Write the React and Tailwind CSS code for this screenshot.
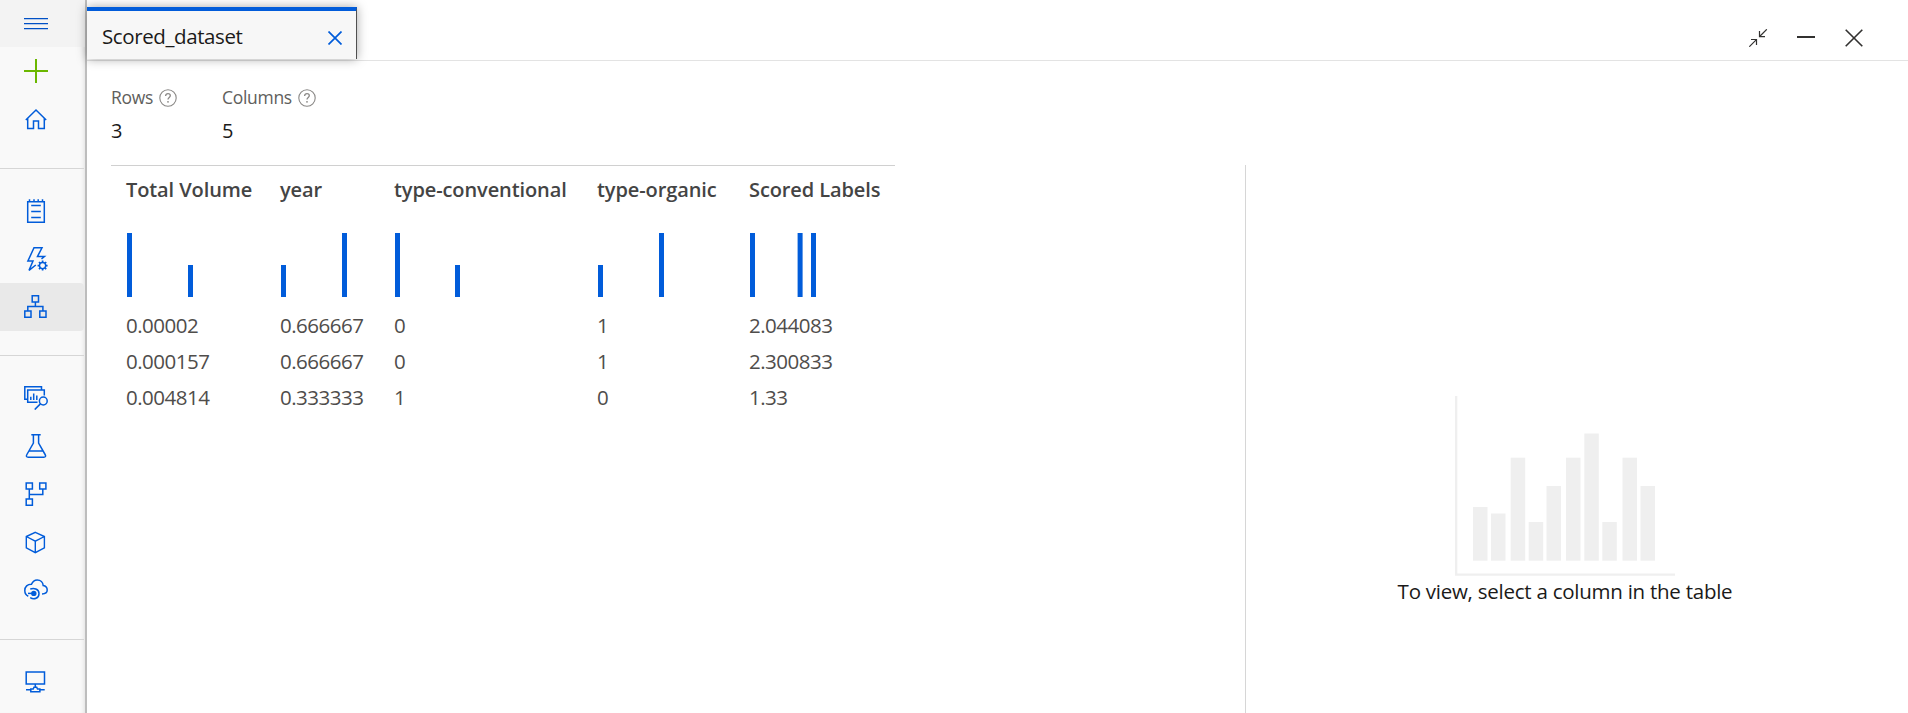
const BLUE = '#015cda';

function Icon({ children, stroke = BLUE }) {
  return (
    <svg className="block size-6" viewBox="0 0 24 24" fill="none" stroke={stroke} strokeWidth="1.5">
      {children}
    </svg>
  );
}

const HomeIcon = () => (
  <Icon>
    <path d="M1.8 13 L12 3 L22.2 13 M3.7 11.5 V21.5 H9.5 V14 H14.5 V21.5 H20.3 V11.5" />
  </Icon>
);
const NotebookIcon = () => (
  <Icon>
    <path d="M3.7 2.7 H20.3 V23.2 H3.7 Z" />
    <path d="M5.5 0.3 V3 M10 0.3 V3 M14.2 0.3 V3 M18.5 0.3 V3" />
    <path d="M7.2 6.6 H16.8 M7.2 12.6 H16.8 M7.2 18.6 H16.8" />
  </Icon>
);
const AutomatedIcon = () => (
  <Icon>
    <path d="M11.8 18 L5 23.3 L9 14 H3.9 L10 0.8 H18 L13.5 9.4 H20.5 L17.5 12" />
    <circle cx="18.6" cy="18.6" r="3.1" strokeWidth="1.4" />
    <path d="M18.6 13.6 V15.4 M18.6 21.8 V23.6 M13.6 18.6 H15.4 M21.8 18.6 H23.6 M15 15 L16.3 16.3 M20.9 20.9 L22.2 22.2 M15 22.2 L16.3 20.9 M20.9 16.3 L22.2 15" strokeWidth="1.7" />
  </Icon>
);
const DesignerIcon = () => (
  <Icon>
    <path d="M8.2 0.8 H14.5 V7 H8.2 Z M0.8 15.9 H7 V22.2 H0.8 Z M15.8 15.9 H22 V22.2 H15.8 Z M11.4 7 V11.5 M3.8 15.9 V11.5 H18.9 V15.9" />
  </Icon>
);
const DatasetIcon = () => (
  <Icon>
    <path d="M3.3 13.3 H0.8 V0.8 H17.5 V4" />
    <path d="M13.5 16.2 H3.7 V4 H20.3 V9.5" />
    <path d="M6.8 14 V10.8 M9.7 14 V7.6 M12.8 14 V9.5" />
    <circle cx="19.3" cy="15" r="3.9" />
    <path d="M16.4 17.9 L10.7 23.6" />
  </Icon>
);
const FlaskIcon = () => (
  <Icon>
    <path d="M7.3 0.8 H16.7 M9.4 0.8 V9 L2.9 20.5 C1.9 22.2 2.4 23.2 4.2 23.2 H19.8 C21.6 23.2 22.1 22.2 21.1 20.5 L14.6 9 V0.8 M5.2 17 H18.8" />
  </Icon>
);
const PipelineIcon = () => (
  <Icon>
    <path d="M2.2 0.9 H8.4 V7.1 H2.2 Z M15.7 0.9 H21.9 V7.1 H15.7 Z M2.2 17 H8.4 V23.2 H2.2 Z M5.3 7.1 V17 M5.3 12.6 H18.8 V7.1" />
  </Icon>
);
const CubeIcon = () => (
  <Icon>
    <path d="M11.3 2.3 L20.4 6.5 V17.8 L11.3 22.6 L2.3 17.8 V6.5 Z M2.3 6.5 L11.3 11.2 L20.4 6.5 M11.3 11.2 V22.6" strokeWidth="1.4" />
  </Icon>
);
const CloudIcon = () => (
  <Icon>
    <path d="M4.3 18.2 C2 17.2 0.8 15.2 0.8 12.5 C0.8 8.7 3.5 6.1 7.5 6.2 C8.7 3.2 10.7 1.9 13.2 1.9 C16.5 1.9 19 4.2 19.2 7.6 C21.8 8 23.2 9.7 23.2 12.1 C23.2 14.8 21.4 16 18 16" />
    <path d="M6.2 11.2 C9.5 9.5 15 10.9 15 15.4 C15 20.4 10 22.1 6.2 19.6" />
    <circle cx="9.8" cy="15.4" r="2.7" fill={BLUE} stroke="none" />
    <path d="M4 15.4 H9" />
  </Icon>
);
const ComputeIcon = () => (
  <Icon>
    <path d="M2.2 1.9 H20.5 V13.9 H2.2 Z M11.3 13.9 V17 M2 19.8 H6.7 M16 19.8 H20.7 M6.8 21.8 V19 H9.2 L10 17.2 H12.7 L13.5 19 H15.9 V21.8 Z" />
  </Icon>
);

const NavItem = ({ children, active }) => (
  <a className={active ? 'flex h-12 w-[84px] items-center rounded-r bg-[#e9e9e9] pl-6' : 'flex h-12 items-center pl-6'}>
    {children}
  </a>
);
const Divider = () => <div className="mb-[18px] h-px w-[84px] shrink-0 bg-[#d6d6d6]" />;

function Sidebar() {
  return (
    <nav className="flex w-[87px] shrink-0 flex-col border-r-2 border-[#bdbdbd] bg-[#f9f9f9] shadow-[inset_-4px_0_4px_-3px_rgba(0,0,0,0.1)]">
      <div className="flex h-[47px] items-start bg-[#f3f3f3] pt-3 pl-6">
        <svg className="block h-6 w-6" viewBox="0 0 24 24" fill="#0050c5">
          <path d="M0 6h24v1.2h-24z M0 11h24v1.2h-24z M0 16h24v1.2h-24z" />
        </svg>
      </div>
      <NavItem>
        <svg className="block size-6" viewBox="0 0 24 24" fill="#6bb700">
          <path d="M11 0h2v24h-2z M0 11h24v2H0z" />
        </svg>
      </NavItem>
      <NavItem><HomeIcon /></NavItem>
      <div className="h-[25px]" />
      <Divider />
      <NavItem><NotebookIcon /></NavItem>
      <NavItem><AutomatedIcon /></NavItem>
      <NavItem active><DesignerIcon /></NavItem>
      <div className="h-6" />
      <Divider />
      <NavItem><DatasetIcon /></NavItem>
      <NavItem><FlaskIcon /></NavItem>
      <NavItem><PipelineIcon /></NavItem>
      <NavItem><CubeIcon /></NavItem>
      <NavItem><CloudIcon /></NavItem>
      <div className="h-[25px]" />
      <Divider />
      <NavItem><ComputeIcon /></NavItem>
    </nav>
  );
}

function Header() {
  return (
    <header className="flex h-[61px] shrink-0 items-start border-b border-[#e3e3e3]">
      <div className="mt-[7px] flex h-[52px] w-[270px] items-center justify-between border-t-4 border-r border-t-[#015cda] border-r-[#505050] bg-[#f7f7f7] pr-[14px] pl-[15px] shadow-[0_0_10px_rgba(0,0,0,0.35)]">
        <span className="mt-[2px] text-[20.5px] leading-7 tracking-[-0.4px] text-[#1b1a19]">Scored_dataset</span>
        <svg className="mt-[6px] block size-[14px]" viewBox="0 0 14 14" stroke={BLUE} strokeWidth="1.7">
          <path d="M0.5 0.5 L13.5 13.5 M13.5 0.5 L0.5 13.5" />
        </svg>
      </div>
      <div className="mt-[29px] ml-auto flex pr-11">
        <svg className="block h-[18px] w-[115px]" viewBox="0 0 115 18" fill="none" stroke="#323130">
          <path d="M0.3 17.7 L7.4 10.6 M2 10.5 H7.5 V16 M17.8 0.3 L10.6 7.5 M10.5 2 V7.6 H16" strokeWidth="1.2" />
          <path d="M48 8 H66" strokeWidth="2" />
          <path d="M96.7 0.7 L113.3 17.3 M113.3 0.7 L96.7 17.3" strokeWidth="1.6" />
        </svg>
      </div>
    </header>
  );
}

const HelpIcon = () => (
  <svg className="block size-[18px]" viewBox="0 0 18 18" fill="none" stroke="#8a8886" strokeWidth="1.1">
    <circle cx="9" cy="9" r="8.2" />
    <path d="M6.6 7 C6.6 5.4 7.6 4.6 9 4.6 C10.4 4.6 11.3 5.4 11.3 6.7 C11.3 8.4 9 8.6 9 10.6" strokeWidth="1.3" />
    <circle cx="9" cy="12.8" r="0.9" fill="#8a8886" stroke="none" />
  </svg>
);

function Stat({ label, value, className }) {
  return (
    <div className={className}>
      <div className="flex h-6 items-center gap-[6px]">
        <span className="-mt-[2px] text-[17.5px] leading-6 tracking-[-0.3px] text-[#605e5c]">{label}</span>
        <HelpIcon />
      </div>
      <div className="mt-[7px] text-[20px] leading-7 text-[#1b1a19]">{value}</div>
    </div>
  );
}

const columns = [
  { name: 'Total Volume', width: 'w-[154px]', bars: [[1, 64], [62, 32]], values: ['0.00002', '0.000157', '0.004814'] },
  { name: 'year', width: 'w-[114px]', bars: [[1, 32], [62, 64]], values: ['0.666667', '0.666667', '0.333333'] },
  { name: 'type-conventional', width: 'w-[203px]', bars: [[1, 64], [61, 32]], values: ['0', '0', '1'] },
  { name: 'type-organic', width: 'w-[152px]', bars: [[1, 32], [62, 64]], values: ['1', '1', '0'] },
  { name: 'Scored Labels', width: 'w-[161px]', bars: [[1, 64], [48.6, 64], [62, 64]], values: ['2.044083', '2.300833', '1.33'] },
];

function DataTable() {
  return (
    <div className="flex w-[784px] border-t border-[#d0d0d0]">
      {columns.map((c) => (
        <div key={c.name} className={`${c.width} shrink-0 pl-[15px]`}>
          <div className="mt-[10px] h-7 text-[20px] leading-7 font-semibold tracking-[-0.1px] whitespace-nowrap text-[#444]">
            {c.name}
          </div>
          <svg className="mt-[29px] block h-16 w-[75px]" viewBox="0 0 75 64" fill={BLUE}>
            {c.bars.map(([x, h]) => (
              <rect key={x} x={x} y={64 - h} width="5" height={h} />
            ))}
          </svg>
          <div className="mt-[10px] text-[20.5px] tracking-[-0.5px] text-[#4f4d4b]">
            {c.values.map((v, i) => (
              <div key={i} className="h-9 leading-9">{v}</div>
            ))}
          </div>
        </div>
      ))}
    </div>
  );
}

const placeholderBars = [
  [18, 111], [36, 117.5], [55.7, 61.7], [73.7, 126], [91.5, 90], [111, 61.7], [129.3, 37.5], [147.3, 126], [167.5, 61.7], [185.5, 90],
];

function ColumnPanel() {
  return (
    <aside className="flex w-[663px] shrink-0 flex-col items-center border-l border-[#d6d6d6] pt-[231px] pr-6">
      <svg className="block h-[180px] w-[220px]" viewBox="0 0 220 180" fill="#efefef">
        <path d="M0 0 H2.3 V177.5 H220 V179.8 H0 Z" />
        {placeholderBars.map(([x, y]) => (
          <rect key={x} x={x} y={y} width="14.5" height={164.7 - y} />
        ))}
      </svg>
      <p className="mt-px text-[20.5px] leading-7 tracking-[-0.25px] whitespace-nowrap text-[#1b1a19]">
        To view, select a column in the table
      </p>
    </aside>
  );
}

export default function App() {
  return (
    <div className="flex h-[713px] w-[1908px] overflow-hidden bg-white font-['Open_Sans','Noto_Sans',sans-serif]">
      <Sidebar />
      <main className="flex min-w-0 flex-1 flex-col">
        <Header />
        <div className="flex h-[104px] shrink-0 pt-[25px] pl-6">
          <Stat label="Rows" value="3" className="w-[111px]" />
          <Stat label="Columns" value="5" />
        </div>
        <div className="flex flex-1 justify-between pl-6">
          <DataTable />
          <ColumnPanel />
        </div>
      </main>
    </div>
  );
}
